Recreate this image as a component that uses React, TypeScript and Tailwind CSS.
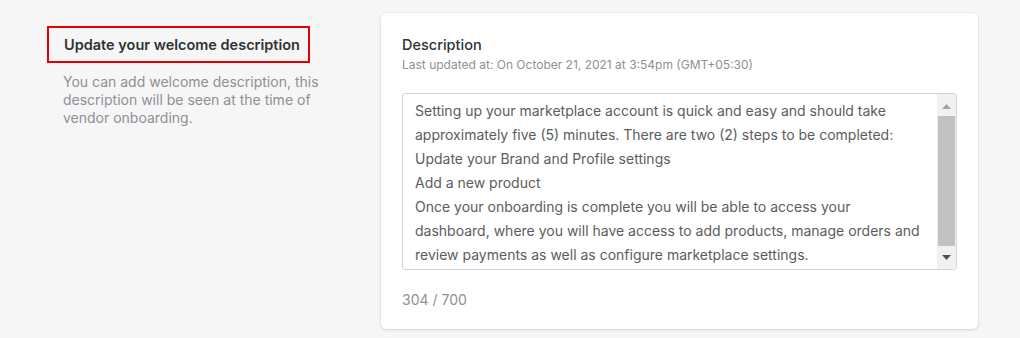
export default function App() {
  const lines = [
    'Setting up your marketplace account is quick and easy and should take',
    'approximately five (5) minutes. There are two (2) steps to be completed:',
    'Update your Brand and Profile settings',
    'Add a new product',
    'Once your onboarding is complete you will be able to access your',
    'dashboard, where you will have access to add products, manage orders and',
    'review payments as well as configure marketplace settings.',
  ]

  return (
    <main
      className="w-[1020px] h-[338px] flex items-start bg-[#f6f6f7] pt-[13px] pl-[47px]"
      style={{ fontFamily: 'Inter, "Liberation Sans", sans-serif' }}
    >
      <section className="w-[334px] shrink-0 pt-[13px]">
        <div className="w-[263px] h-[37px] border-2 border-[#e60000] flex items-center pl-[15px]">
          <h2 className="text-[14.5px] leading-5 font-semibold text-[#303233]">Update your welcome description</h2>
        </div>
        <p className="mt-[10px] pl-[16px] w-[290px] text-[14px] leading-[18px] text-[#8c9196]">
          You can add welcome description, this description will be seen at the time of vendor onboarding.
        </p>
      </section>

      <section className="w-[597px] bg-white rounded-[5px] shadow-[0_0_0_1px_rgba(63,63,68,0.04),0_1px_3px_rgba(63,63,68,0.15)] px-[21px] pt-[22px] pb-[19px]">
        <h3 className="text-[14.5px] leading-5 font-medium text-[#303233]">Description</h3>
        <p className="mt-[2px] text-[12px] leading-4 text-[#8c9196]">
          Last updated at: On October 21, 2021 at 3:54pm (GMT+05:30)
        </p>

        <div className="mt-[20px] h-[177px] border border-[#d2d5d8] rounded-[3px] flex overflow-hidden">
          <div className="flex-1 pl-[12px] pt-[5px] text-[14px] leading-6 text-[#5a5d60] overflow-hidden">
            {lines.map((l, i) => (
              <div key={i} className="whitespace-nowrap">{l}</div>
            ))}
          </div>
          <div className="w-[19px] bg-[#f1f1f1] flex flex-col items-center">
            <div className="h-[22px] flex items-center justify-center pt-[2px]">
              <svg width="9" height="5" viewBox="0 0 9 5"><path d="M0 5 L4.5 0 L9 5 Z" fill="#a3a3a3" /></svg>
            </div>
            <div className="w-[17px] h-[130px] bg-[#c1c1c1]" />
            <div className="flex-1 flex items-center justify-center">
              <svg width="9" height="5" viewBox="0 0 9 5"><path d="M0 0 L4.5 5 L9 0 Z" fill="#505050" /></svg>
            </div>
          </div>
        </div>

        <p className="mt-[20px] text-[14px] leading-5 text-[#8c9196]">304 / 700</p>
      </section>
    </main>
  )
}
